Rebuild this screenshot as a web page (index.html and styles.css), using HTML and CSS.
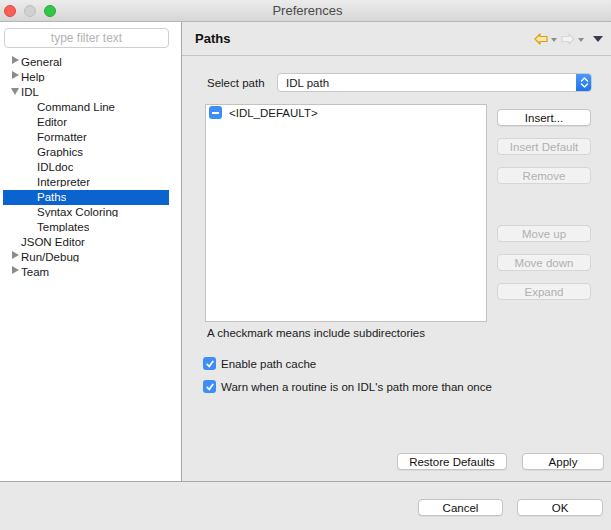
FILE: index.html
```html
<!DOCTYPE html>
<html>
<head>
<meta charset="utf-8">
<link rel="stylesheet" href="styles.css">
</head>
<body>
<div class="window">
  <div class="titlebar">
    <div class="lights">
      <span class="light red"></span>
      <span class="light gray"></span>
      <span class="light green"></span>
    </div>
    <div class="title">Preferences</div>
  </div>
  <div class="main">
    <div class="sidebar">
      <div class="filter">type filter text</div>
      <ul class="tree">
        <li class="row"><span class="twisty closed"></span><span class="lbl">General</span></li>
        <li class="row"><span class="twisty closed"></span><span class="lbl">Help</span></li>
        <li class="row"><span class="twisty open"></span><span class="lbl">IDL</span></li>
        <li class="row child"><span class="lbl">Command Line</span></li>
        <li class="row child"><span class="lbl">Editor</span></li>
        <li class="row child"><span class="lbl">Formatter</span></li>
        <li class="row child"><span class="lbl">Graphics</span></li>
        <li class="row child"><span class="lbl">IDLdoc</span></li>
        <li class="row child"><span class="lbl">Interpreter</span></li>
        <li class="row child selected"><span class="lbl">Paths</span></li>
        <li class="row child"><span class="lbl">Syntax Coloring</span></li>
        <li class="row child"><span class="lbl">Templates</span></li>
        <li class="row"><span class="twisty none"></span><span class="lbl">JSON Editor</span></li>
        <li class="row"><span class="twisty closed"></span><span class="lbl">Run/Debug</span></li>
        <li class="row"><span class="twisty closed"></span><span class="lbl">Team</span></li>
      </ul>
    </div>
    <div class="content">
      <div class="header">
        <div class="htitle">Paths</div>
        <div class="navs">
          <svg class="nav" width="14" height="12" viewBox="0 0 14 12"><path d="M1 6 L6 1 L6 3.5 L13 3.5 L13 8.5 L6 8.5 L6 11 Z" fill="#fbe7a6" stroke="#d99e18" stroke-width="1.2" stroke-linejoin="round"/></svg>
          <span class="minitri"></span>
          <svg class="nav fwd" width="14" height="12" viewBox="0 0 14 12"><path d="M13 6 L8 1 L8 3.5 L1 3.5 L1 8.5 L8 8.5 L8 11 Z" fill="#f3f3f3" stroke="#d6d6d6" stroke-width="1.2" stroke-linejoin="round"/></svg>
          <span class="minitri"></span>
          <span class="menutri"></span>
        </div>
      </div>
      <div class="body">
        <div class="selrow">
          <span class="sellbl">Select path</span>
          <div class="combo">
            <span class="comboval">IDL path</span>
            <span class="stepper">
              <svg width="9" height="13" viewBox="0 0 9 13"><path d="M1.5 5 L4.5 2 L7.5 5 M1.5 8 L4.5 11 L7.5 8" fill="none" stroke="#fff" stroke-width="1.4" stroke-linecap="round" stroke-linejoin="round"/></svg>
            </span>
          </div>
        </div>
        <div class="listrow">
          <div class="listbox">
            <div class="entry">
              <span class="cbox"><span class="dash"></span></span>
              <span>&lt;IDL_DEFAULT&gt;</span>
            </div>
          </div>
          <div class="btncol">
            <button class="btn">Insert...</button>
            <button class="btn dis">Insert Default</button>
            <button class="btn dis">Remove</button>
            <button class="btn dis gap">Move up</button>
            <button class="btn dis">Move down</button>
            <button class="btn dis">Expand</button>
          </div>
        </div>
        <div class="note">A checkmark means include subdirectories</div>
        <div class="checks">
          <label class="check"><span class="cbox"><svg width="12" height="12" viewBox="0 0 12 12"><path d="M3.2 6.3 L5.2 8.5 L8.8 3.4" fill="none" stroke="#fff" stroke-width="1.8" stroke-linecap="round" stroke-linejoin="round"/></svg></span>Enable path cache</label>
          <label class="check"><span class="cbox"><svg width="12" height="12" viewBox="0 0 12 12"><path d="M3.2 6.3 L5.2 8.5 L8.8 3.4" fill="none" stroke="#fff" stroke-width="1.8" stroke-linecap="round" stroke-linejoin="round"/></svg></span>Warn when a routine is on IDL's path more than once</label>
        </div>
        <div class="actions">
          <button class="btn restore">Restore Defaults</button>
          <button class="btn apply">Apply</button>
        </div>
      </div>
    </div>
  </div>
  <div class="footer">
    <button class="btn cancel">Cancel</button>
    <button class="btn ok">OK</button>
  </div>
</div>
</body>
</html>
```

FILE: styles.css
```css
* { box-sizing: border-box; }
html, body { margin: 0; padding: 0; }
body {
  font-family: "Liberation Sans", Arial, sans-serif;
  font-size: 11px;
  color: #1a1a1a;
  background: #e8e8e8;
}
.window { width: 611px; height: 530px; display: flex; flex-direction: column; overflow: hidden; }

.titlebar {
  height: 22px;
  flex: none;
  background: linear-gradient(#ececec, #d6d6d6);
  border-bottom: 1px solid #b5b5b5;
  display: flex;
  align-items: center;
  position: relative;
}
.lights { display: flex; gap: 8px; padding-left: 4px; }
.light { width: 12px; height: 12px; border-radius: 50%; display: block; }
.light.red { background: #fc5f57; border: 1px solid #df4744; }
.light.gray { background: #d0d0d0; border: 1px solid #bebebe; }
.light.green { background: #33c748; border: 1px solid #27aa35; }
.title {
  flex: 1;
  text-align: center;
  font-size: 13px;
  color: #4a4a4a;
  margin-right: 52px;
}

.main { flex: none; height: 460px; display: flex; border-bottom: 1px solid #a8a8a8; }

.sidebar {
  width: 182px;
  flex: none;
  background: #fff;
  border-right: 1px solid #a6a6a6;
  padding: 6px 0 0 0;
}
.filter {
  margin: 0 12px 0 4px;
  height: 20px;
  border: 1px solid #cfcfcf;
  border-radius: 4px;
  color: #b3b3b3;
  font-size: 12px;
  text-align: center;
  line-height: 18px;
}
.tree { list-style: none; margin: 7px 0 0 0; padding: 0; }
.row {
  height: 15px;
  line-height: 15px;
  display: flex;
  align-items: flex-start;
  padding-left: 9px;
  margin-right: 12px;
  margin-left: 3px;
  overflow: hidden;
}
.row .lbl { display: block; height: 12px; overflow: hidden; line-height: 15px; font-size: 11.5px; }
.row.child { padding-left: 34px; }
.row.selected { background: #0b63cf; color: #fff; }
.twisty { width: 7px; height: 15px; flex: none; position: relative; margin-right: 2px; }
.twisty.closed::before {
  content: ""; position: absolute; left: 0; top: 1px;
  border-left: 7px solid #8c8c8c; border-top: 4.5px solid transparent; border-bottom: 4.5px solid transparent;
}
.twisty.open::before {
  content: ""; position: absolute; left: -1px; top: 3px;
  border-top: 7px solid #8c8c8c; border-left: 4.5px solid transparent; border-right: 4.5px solid transparent;
}

.content { flex: 1; display: flex; flex-direction: column; }
.header {
  height: 34px;
  flex: none;
  border-bottom: 1px solid #c4c4c4;
  display: flex;
  align-items: center;
  padding: 0 8px 0 13px;
}
.htitle { flex: 1; font-weight: bold; font-size: 13px; color: #111; }
.navs { display: flex; align-items: center; }
.nav { display: block; }
.minitri {
  width: 0; height: 0; margin: 2px 4px 0 3px;
  border-top: 4px solid #8d8d8d; border-left: 3px solid transparent; border-right: 3px solid transparent;
}
.menutri {
  width: 0; height: 0; margin: 1px 0 0 5px;
  border-top: 6px solid #3c3c50; border-left: 5px solid transparent; border-right: 5px solid transparent;
}

.body { flex: 1; display: flex; flex-direction: column; padding: 17px 7px 11px 21px; }
.selrow { display: flex; align-items: center; padding-left: 4px; }
.sellbl { width: 70px; font-size: 11.5px; }
.combo {
  flex: 1;
  height: 19px;
  background: #fff;
  border: 1px solid #c8c8c8;
  border-radius: 4px;
  display: flex;
  align-items: center;
  padding-left: 8px;
  margin-right: 12px;
  overflow: hidden;
}
.comboval { flex: 1; font-size: 11.5px; }
.stepper {
  width: 16px; height: 19px; margin-right: -1px;
  background: linear-gradient(#4c9cf8, #1c72ee);
  display: flex; align-items: center; justify-content: center;
}
.listrow { display: flex; margin-top: 12px; padding-left: 2px; }
.listbox {
  width: 282px; height: 218px;
  background: #fff;
  border: 1px solid #c2c2c2;
  padding: 1px 0 0 3px;
}
.entry { display: flex; align-items: center; gap: 7px; font-size: 11.5px; }
.cbox {
  width: 13px; height: 13px; border-radius: 3px;
  background: #3c8ef6;
  display: flex; align-items: center; justify-content: center; flex: none;
}
.dash { width: 7px; height: 2px; background: #fff; }
.btncol { display: flex; flex-direction: column; gap: 12px; margin-left: 10px; padding-top: 5px; }
.btn {
  font-family: "Liberation Sans", Arial, sans-serif;
  font-size: 11.5px;
  height: 17px;
  width: 94px;
  padding: 0;
  background: #fff;
  border: 1px solid #c4c4c4;
  border-radius: 4px;
  color: #111;
  box-shadow: 0 1px 0 rgba(0,0,0,0.06);
}
.btn.dis { background: #f2f2f2; border-color: #d6d6d6; color: #b0b0b0; box-shadow: none; }
.btn.gap { margin-top: 29px; }
.note { margin-top: 5px; padding-left: 4px; font-size: 11.5px; }
.checks { display: flex; flex-direction: column; gap: 10px; margin-top: 18px; }
.check { display: flex; align-items: center; gap: 5px; font-size: 11.5px; }
.check .cbox { width: 13px; height: 13px; }
.actions { margin-top: auto; display: flex; justify-content: flex-end; gap: 15px; }
.btn.restore { width: 110px; }
.btn.apply { width: 82px; }

.footer { flex: 1; display: flex; justify-content: flex-end; gap: 14px; padding: 17px 8px 0 0; }
.btn.cancel { width: 85px; }
.btn.ok { width: 86px; }
```
